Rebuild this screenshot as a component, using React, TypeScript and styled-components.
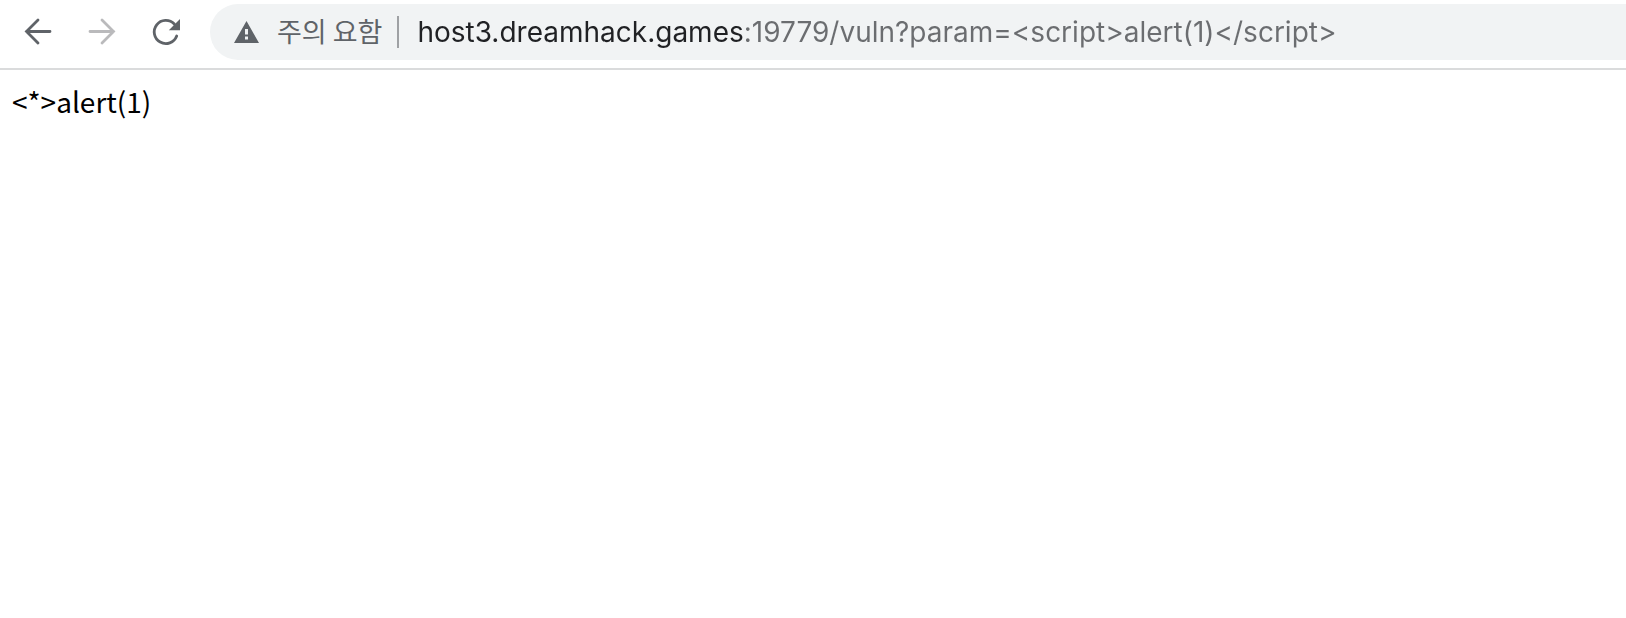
import React, { useState } from "react";
import styled, { createGlobalStyle } from "styled-components";

const GlobalStyle = createGlobalStyle`
  *, *::before, *::after { box-sizing: border-box; }
  body {
    margin: 0;
    background: #ffffff;
    color: #000000;
    font-family: Inter, "Noto Sans CJK KR", sans-serif;
  }
`;

const Toolbar = styled.header`
  display: flex;
  align-items: center;
  gap: 22px;
  padding: 4px 0 8px 16px;
  border-bottom: 2px solid #dadbdc;
`;

const Navigation = styled.nav`
  display: flex;
  gap: 20px;
`;

const NavButton = styled.button`
  display: flex;
  width: 44px;
  height: 44px;
  padding: 0;
  border: 0;
  border-radius: 50%;
  background: none;
  color: #5f6368;

  &:disabled {
    color: #bababc;
  }
`;

const AddressBar = styled.form`
  display: flex;
  flex: 1;
  align-items: center;
  min-width: 0;
  height: 56px;
  padding-left: 24px;
  border-radius: 28px 0 0 28px;
  background: #f1f3f4;
`;

const SecurityButton = styled.button`
  display: flex;
  flex: none;
  align-items: center;
  gap: 18px;
  height: 32px;
  padding: 0 15px 0 0;
  border: 0;
  border-right: 2px solid #9fa1a4;
  background: none;
  color: #5f6368;
  font-family: "Noto Sans CJK KR", sans-serif;
  font-size: 27px;
  line-height: 28px;
  white-space: nowrap;
`;

const SecurityLabel = styled.span`
  padding-bottom: 2px;
`;

const AddressInput = styled.input<{ $hostWidth: number }>`
  flex: 1;
  min-width: 0;
  height: 40px;
  margin-left: 18px;
  padding: 0;
  border: 0;
  outline: 0;
  background: linear-gradient(
    to right,
    #202124 ${(p) => p.$hostWidth}px,
    #6b6d70 ${(p) => p.$hostWidth}px
  );
  background-clip: text;
  -webkit-background-clip: text;
  -webkit-text-fill-color: transparent;
  color: #202124;
  caret-color: #202124;
  font-family: Inter, sans-serif;
  font-size: 28px;
  line-height: 40px;
`;

const Page = styled.main`
  padding: 13px 12px;
  font-family: "Noto Sans CJK KR", sans-serif;
  font-size: 28px;
  line-height: 36px;
`;

export default function App() {
  const [address, setAddress] = useState(
    "host3.dreamhack.games:19779/vuln?param=<script>alert(1)</script>"
  );

  return (
    <>
      <GlobalStyle />
      <Toolbar>
        <Navigation aria-label="Navigation">
          <NavButton type="button" aria-label="Back">
            <svg width="44" height="44" viewBox="0 0 44 44" fill="none" stroke="currentColor" strokeWidth="2.8" strokeLinecap="round" strokeLinejoin="miter">
              <path d="M34 21.5H10.5M22 9.9L10.5 21.5L22 33.1" />
            </svg>
          </NavButton>
          <NavButton type="button" aria-label="Forward" disabled>
            <svg width="44" height="44" viewBox="0 0 44 44" fill="none" stroke="currentColor" strokeWidth="2.8" strokeLinecap="round" strokeLinejoin="miter">
              <path d="M10 21.5H33.5M22 9.9L33.5 21.5L22 33.1" />
            </svg>
          </NavButton>
          <NavButton type="button" aria-label="Reload">
            <svg width="44" height="44" viewBox="0 0 44 44" fill="none">
              <path d="M32.7 26A11.6 11.6 0 1 1 30.3 14" stroke="currentColor" strokeWidth="2.8" strokeLinecap="round" />
              <path d="M36 9V20.2H24.8Z" fill="currentColor" />
            </svg>
          </NavButton>
        </Navigation>
        <AddressBar onSubmit={(e) => e.preventDefault()}>
          <SecurityButton type="button">
            <svg width="25" height="22" viewBox="0 0 25 22" aria-hidden="true">
              <path d="M12.5 0L25 22H0ZM11 8V13.5H14V8ZM11 15.5V18.5H14V15.5Z" fill="currentColor" fillRule="evenodd" />
            </svg>
            <SecurityLabel>주의 요함</SecurityLabel>
          </SecurityButton>
          <AddressInput
            $hostWidth={326}
            aria-label="Address"
            spellCheck={false}
            value={address}
            onChange={(e) => setAddress(e.target.value)}
          />
        </AddressBar>
      </Toolbar>
      <Page>&lt;*&gt;alert(1)</Page>
    </>
  );
}
